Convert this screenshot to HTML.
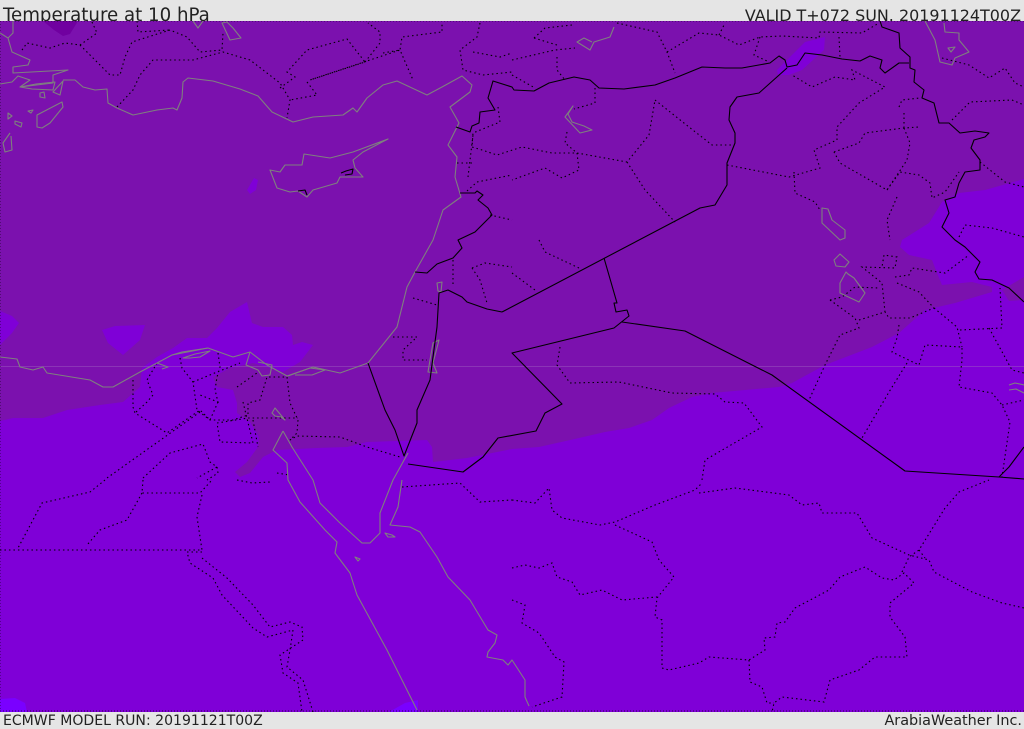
<!DOCTYPE html>
<html><head><meta charset="utf-8"><title>Temperature at 10 hPa</title>
<style>
html,body{margin:0;padding:0;background:#e5e5e5;}
#w{position:relative;width:1024px;height:729px;overflow:hidden;background:#e5e5e5;font-family:"DejaVu Sans",sans-serif;color:#222;}
.t{position:absolute;white-space:nowrap;line-height:1;}
svg{position:absolute;left:0;top:21px;}
</style></head><body><div id="w">
<div class="t" style="left:3px;top:6px;font-size:18.2px;margin-top:1px;">Temperature at 10 hPa</div>
<div class="t" style="right:3px;top:8px;font-size:15.95px;">VALID T+072 SUN. 20191124T00Z</div>
<svg width="1024" height="691" viewBox="0 21 1024 691">
<rect x="0" y="21" width="1024" height="691" fill="#7f00d7"/>
<path fill="#7b11ae" d="M0 421L13 418L43 418L67 410L100 405L123 402L140 387L142 368L157 357L173 348L187 338L207 338L217 328L230 312L247 302L252 323L263 327L283 327L292 335L293 345L302 342L313 345L300 362L283 372L253 363L230 368L213 377L217 387L233 390L237 403L237 413L250 422L259 437L258 447L247 462L235 472L240 477L250 473L263 457L277 450L317 448L347 447L367 442L427 440L432 447L433 462L467 458L512 449L539 447L579 438L605 432L629 428L652 420L669 408L692 397L712 393L779 387L792 383L825 365L872 347L899 333L925 310L955 303L992 292L992 287L972 282L942 285L937 273L932 260L909 255L900 247L902 240L929 223L942 202L959 193L985 190L1024 179L1024 21L0 21Z"/>
<path fill="#7b11ae" d="M1024 277L1002 290L1009 301L1024 300Z"/>
<path fill="#7f00d7" d="M0 311L12 316L19 323L12 333L0 345Z"/>
<path fill="#7f00d7" d="M102 330L115 326L145 325L140 340L123 355L108 343Z"/>
<path fill="#7f00d7" d="M247 190L254 178L258 180L256 190L250 194Z"/>
<path fill="#7f00d7" d="M777 70L805 42L825 37L824 50L802 70L789 75L778 75Z"/>
<path fill="#7000a0" d="M43 21L54 30L63 36L70 34L78 21Z"/>
<path fill="#7a00ff" d="M0 699L15 698L25 703L27 712L0 712Z"/>
<path fill="#7a00ff" d="M389 712L405 703L418 700L418 712Z"/>
<rect x="0" y="366" width="1024" height="1" fill="#a060c0" opacity=".45"/>
<g fill="none" stroke="#000" stroke-width="1.1" stroke-dasharray="1.5 3">
<path d="M0 21H1024M0 711H1024M0 21V711" stroke-dasharray="1 2" opacity=".6"/>
<path d="M22 50L27 43L50 48L65 43L80 45L97 33L92 22M80 45L110 75L120 75L125 57L132 42L170 30L187 37L200 52L222 50L223 33M117 107L133 90L140 75L153 60L193 60L223 52L250 60L280 83L290 100L287 118M280 88L295 77L287 72L307 50L347 39L365 62L310 80L400 50L413 80M307 82L317 95L290 100M365 62L380 43L380 32L368 23M383 53L400 50L402 37L442 32L442 22M480 23L477 37L460 50L463 70L483 75L512 72M473 52L500 57L512 53M137 21L138 32L170 30"/>
<path d="M498 107L500 122L473 133L472 147L482 150L497 155L522 147L552 153L577 153L627 162L649 135L655 100M577 153L579 170L562 178L545 168L512 180M595 88L595 103L574 109M567 132L565 143L577 153M627 162L645 190L675 222M655 100L689 127L712 145L732 145M727 165L789 177L820 168L814 150L837 140L837 127L859 103L885 87L852 70L855 80L835 77L812 87L792 75M794 172L795 193L815 202L820 210M834 152L859 143L865 133L904 128L919 127M904 128L910 143L907 160L887 190L840 163L834 152M899 107L902 100L920 98M904 113L904 128M887 190L900 172L919 175L930 183L932 198L945 192L959 172M897 197L887 220L890 240M980 162L1005 182L1024 187M942 58L969 65L989 78L1005 68L1015 83L1024 87M952 120L970 102L1012 100L1024 105M959 237L965 225L992 228L1024 237M512 60L555 50L575 48M557 57L557 70L565 80M534 38L545 28L572 25M534 38L557 45M617 23L657 32L667 52L675 73M667 52L699 33L719 35L739 45L760 37L782 36L819 38L820 32L862 33L879 23M719 35L725 23M760 37L754 55L769 62M839 37L840 57M512 75L535 88"/>
<path d="M859 320L885 312L882 283L862 267L895 268L897 257L884 255L882 267M895 277L909 275L912 268L945 273L969 255M897 283L919 292L934 308L910 318L889 318L885 312M830 300L842 297L855 287L879 288M830 300L855 318L859 328L840 335L825 365L809 400M899 325L897 338L892 352L919 365L925 345L962 347L962 360L959 387L992 393L1002 405L1010 422L1002 477M934 308L957 327L962 347M960 330L1002 328L1000 288M989 328L1012 370L1024 373M907 363L889 392L862 438M1002 405L1024 400"/>
<path d="M560 347L557 365L570 383L619 382L672 393L715 394L725 402L744 403L762 427L705 460L702 480M512 273L535 290M539 240L545 252L579 268M490 215L512 220M453 260L453 287M472 268L485 263L512 267M472 268L480 280L487 303M468 177L473 135M457 163L473 163M477 182L512 175M467 191L477 182M413 298L437 305M393 337L417 337L403 350L403 360L427 360"/>
<path d="M133 380L133 407L135 413L167 433L200 410L210 420M157 363L147 380L153 395L147 402L135 413M180 358L182 368L193 382L197 410L210 420L233 420L248 415L248 403L260 400L267 377L287 377L290 403L298 420L297 433L290 440L297 436L340 437L367 447L400 457M218 353L220 367L217 377L215 390L218 402L200 395M218 402L210 420M193 382L217 372L240 363M237 387L257 373M243 402L253 443L220 442L217 423L248 418L298 418M253 420L258 447M200 412L107 478M143 478L170 453L203 444L210 462L217 467L197 478M217 467L218 473L207 480M277 473L289 475"/>
<path d="M105 480L90 492L42 503L18 548M143 480L142 493L200 493L212 480M142 493L127 520L100 530L87 545M202 495L197 517L202 550L0 550M202 552L187 552L190 563L213 578L222 595L253 628L267 637L293 630L290 650L287 667L303 680L313 712M202 558L227 578L253 605L263 618L270 627L290 622L302 627L303 640L280 655L283 673L298 683L302 712M402 487L460 483L480 502L512 500M237 480L252 483L270 482"/>
<path d="M512 500L535 503L549 488L552 510L562 518L600 525L615 522L655 505L695 490L702 483M615 525L652 542L659 560L674 577L657 598L655 617L662 620L662 668L669 670L699 663L709 657L749 660L765 650L764 638L775 637L777 623L785 622L795 608L829 590L840 577L865 567L882 578L894 580L904 573L914 583L890 603L890 617L905 637L907 657L875 657L859 670L830 680L824 702L782 697L774 703L772 712M749 660L750 682L762 687L767 703L774 703M699 493L735 488L789 495L802 505L819 503L822 513L857 513L872 538L909 555L929 560L934 572L972 592L1002 603L1024 608M902 572L909 557L919 550L945 508L959 492L989 480M919 550L925 558M512 568L525 565L539 568L552 563L557 577L572 582L580 595L602 590L622 600L657 597M512 600L525 605L522 623L539 633L555 657L564 662L562 697L532 707"/>
</g>
<g fill="none" stroke="#7f7f7f" stroke-width="1.1" stroke-linejoin="round">
<path d="M0 33L8 38L12 52L30 60L28 65L13 67L13 73L68 70L53 75L53 83L20 87L30 80L18 76L12 82L0 84M13 21L13 33L8 38"/>
<path d="M63 80L75 80L83 87L95 90L107 89L108 103L117 108L133 115L157 110L173 108L177 110L182 98L183 82L188 78L213 81L240 89L258 96L272 112L293 122L313 117L343 115L353 108L357 112L367 98L383 85L397 81L427 95L442 87L462 76L472 85L470 92L450 107L459 123L448 145L457 157L455 177L461 197L443 210L433 240L415 272L407 287L397 327L368 363L340 373L313 367L287 376L267 365L250 352L233 357L208 348L172 355L157 363L140 372L113 387L103 387L90 380L47 373L43 367L33 370L20 367L17 359L0 357"/>
<path d="M20 87L36 84L55 82L53 90L32 89ZM63 81L53 92L60 95ZM8 113L12 116L8 119ZM15 121L22 123L21 127L15 124ZM40 93L44 92L45 98L40 97ZM37 127L37 115L62 102L63 107L50 123L42 128ZM28 111L33 110L31 113ZM10 133L3 143L5 152L12 150L11 136M193 21L198 28L203 21M222 23L230 40L241 38L233 28L227 22Z"/>
<path d="M388 139L363 152L353 160L355 168L363 177L340 177L337 183L313 190L307 197L298 191L290 192L277 188L270 170L280 172L285 165L302 165L304 154L330 158L353 152Z"/>
<path d="M283 431L273 450L287 463L288 480L300 502L325 530L337 542L335 553L350 573L357 595L387 650L417 710M283 431L292 447L313 480L320 503L340 523L362 543L370 543L380 533L380 513L393 480L408 453M402 480L398 507L390 525L410 527L420 532L437 557L448 577L470 600L488 630L497 635L495 643L488 652L487 657L503 660L508 665L512 660L525 680L525 697L529 706M355 557L360 559L358 561ZM385 533L392 535L395 537L388 537Z"/>
<path d="M172 355L182 352L208 348M183 358L195 354L210 351L200 357L190 358ZM250 352L246 365L258 370L262 376L270 375L272 365L258 362M288 376L310 368L325 370L312 375L295 375M157 363L168 367L162 369M272 413L275 408L285 420L281 417L275 416Z"/>
<path d="M573 106L565 117L580 133L592 130L584 126L572 122L568 114ZM614 27L610 37L594 42L590 50L577 42L584 38L592 42M925 21L935 40L940 62L952 65L955 58L969 52L959 40L959 33L945 32L944 23M948 48L955 47L951 52ZM822 208L822 223L840 240L845 238L845 230L832 220L828 209ZM834 260L840 254L849 262L845 267L836 266ZM846 272L840 283L840 293L859 302L865 293L854 278L848 274Z"/>
<path d="M433 343L430 360L428 372L437 373L433 363L439 340ZM437 283L442 282L441 292L438 291ZM1009 385L1015 383L1024 385M1009 390L1016 389L1024 393"/>
</g>
<g fill="none" stroke="#000" stroke-width="1.1" stroke-linejoin="round">
<path d="M456 127L470 132L472 126L479 123L480 112L495 110L488 98L493 81L512 87L514 90L534 91L549 83L574 77L590 80L599 88L624 89L655 85L675 78L702 67L725 68L742 68L770 63L779 56L785 60L787 67L797 65L805 53L822 55L842 59L860 61L870 56L882 60L880 68L885 73L899 63L909 63"/>
<path d="M880 21L882 27L899 33L900 48L910 57L910 68L915 70L914 82L924 90L922 98L934 103L939 123L949 123L960 133L975 131L989 133L985 137L974 140L971 148L980 160L980 170L965 172L959 183L955 197L945 200L949 213L942 227L955 240L965 247L980 262L975 272L979 279L992 280L1009 288L1024 302"/>
<path d="M787 68L759 93L737 97L730 107L729 120L735 133L735 143L727 163L727 185L715 205L700 208L502 312"/>
<path d="M604 258L617 303L614 303L616 312L627 310L629 316L614 328L512 353L562 404L545 413L536 431L498 438L483 457L463 472L408 464"/>
<path d="M622 322L685 331L772 375L905 471L999 477L1024 479M1024 447L1009 467L999 477"/>
<path d="M415 272L427 273L437 264L453 258L462 248L458 240L475 232L492 215L488 208L478 200L483 195L477 191L475 193L460 193"/>
<path d="M502 312L487 309L467 302L462 297L448 290L439 293L437 327L433 357L430 380L417 410L417 423L404 456L395 430L385 410L368 363"/>
<path d="M341 173L346 171L353 169L352 174L345 175M298 191L305 190L307 195"/>
</g>
</svg>
<div class="t" style="left:3px;top:714px;font-size:14.05px;">ECMWF MODEL RUN: 20191121T00Z</div>
<div class="t" style="right:2px;top:714px;font-size:14.4px;">ArabiaWeather Inc.</div>
</div></body></html>
